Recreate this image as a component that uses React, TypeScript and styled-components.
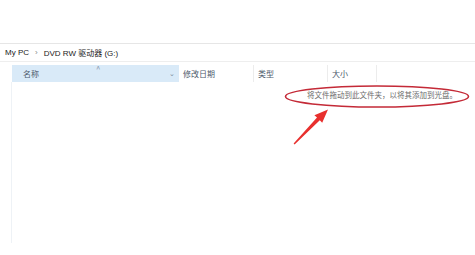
import React from "react";
import styled, { createGlobalStyle } from "styled-components";

const GlobalStyle = createGlobalStyle`
  html, body {
    margin: 0;
    padding: 0;
    background: #ffffff;
  }
  body {
    font-family: "Liberation Sans", "Noto Sans CJK SC", sans-serif;
    color: #333;
  }
`;

// Whole explorer window
const Window = styled.div`
  position: relative;
  width: 475px;
  height: 255px;
  overflow: hidden;
  display: flex;
  flex-direction: column;
  background: #fff;
`;

const TopSpace = styled.div`
  height: 43px;
  border-bottom: 1px solid #e6e6e6;
`;

// Breadcrumb bar
const AddressBar = styled.div`
  height: 17px;
  display: flex;
  align-items: center;
  gap: 6px;
  padding-left: 5px;
  font-size: 8px;
  color: #222;
  border-bottom: 1px solid #eeeeee;
`;

const Crumb = styled.span`
  white-space: nowrap;
`;

const Chevron = styled.span`
  color: #888;
  font-size: 8px;
`;

const Body = styled.div`
  flex: 1;
  display: flex;
`;

const NavPane = styled.div`
  width: 11px;
  border-right: 1px solid #eef2f6;
  margin-top: 20px;
  margin-bottom: 12px;
`;

const ListArea = styled.div`
  flex: 1;
  display: flex;
  flex-direction: column;
  padding-top: 3px;
`;

const HeaderRow = styled.div`
  height: 17px;
  display: flex;
`;

const HeaderCell = styled.div<{ w: number; active?: boolean }>`
  position: relative;
  width: ${({ w }) => w}px;
  box-sizing: border-box;
  display: flex;
  align-items: center;
  padding-left: ${({ active }) => (active ? 11 : 4)}px;
  font-size: 8px;
  color: #4c5a6b;
  background: ${({ active }) => (active ? "#d9eaf8" : "transparent")};
  border-right: 1px solid ${({ active }) => (active ? "#d9eaf8" : "#ececec")};
  font-family: "Noto Sans CJK SC", sans-serif;
`;

const SortArrow = styled.span`
  position: absolute;
  left: 84px;
  top: -2px;
  font-size: 8px;
  color: #8a9aae;
`;

const DropArrow = styled.span`
  position: absolute;
  right: 3px;
  top: 3px;
  font-size: 7px;
  color: #7a8a9c;
`;

const EmptyRow = styled.div`
  display: flex;
  justify-content: flex-end;
  padding-right: 18px;
  margin-top: 7px;
`;

const EmptyText = styled.span`
  font-family: "Noto Sans CJK SC", sans-serif;
  font-size: 7.5px;
  color: #6d6d6d;
  white-space: nowrap;
`;

// Red annotation drawn over the screenshot
const Annotation = styled.svg`
  position: absolute;
  left: 0;
  top: 0;
  pointer-events: none;
`;

export default function App() {
  return (
    <>
      <GlobalStyle />
      <Window>
        <TopSpace />
        <AddressBar>
          <Crumb>My PC</Crumb>
          <Chevron>›</Chevron>
          <Crumb>DVD RW 驱动器 (G:)</Crumb>
        </AddressBar>
        <Body>
          <NavPane />
          <ListArea>
            <HeaderRow>
              <HeaderCell w={167} active>
                名称
                <SortArrow>^</SortArrow>
                <DropArrow>⌄</DropArrow>
              </HeaderCell>
              <HeaderCell w={75}>修改日期</HeaderCell>
              <HeaderCell w={74}>类型</HeaderCell>
              <HeaderCell w={49}>大小</HeaderCell>
            </HeaderRow>
            <EmptyRow>
              <EmptyText>将文件拖动到此文件夹，以将其添加到光盘。</EmptyText>
            </EmptyRow>
          </ListArea>
        </Body>
        <Annotation width="475" height="255" viewBox="0 0 475 255">
          <ellipse cx="377" cy="96.5" rx="91.5" ry="10.5" fill="none" stroke="#c42a37" strokeWidth="1.6" />
          <polygon
            points="328,109.5 322.2,122.8 319.8,120.3 294.6,144.4 293.6,143.4 317.0,117.4 314.4,115.2"
            fill="#e8302e"
          />
        </Annotation>
      </Window>
    </>
  );
}
